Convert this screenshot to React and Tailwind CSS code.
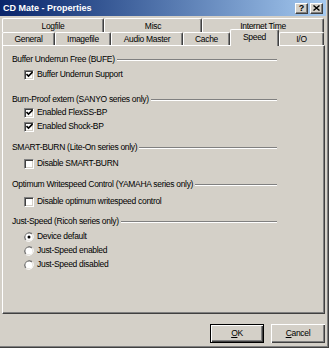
import React from 'react';

const raised =
  'border border-t-white border-l-white border-r-[#404040] border-b-[#404040] shadow-[inset_-1px_-1px_#808080]';

function TitleBar() {
  return (
    <div className="w-[326px] h-[16px] flex items-center bg-gradient-to-r from-[#0a246a] to-[#a6caf0] pl-[3px] pr-[3px] tracking-normal">
      <span className="text-white font-bold text-[9px] leading-none">CD Mate - Properties</span>
      <div className="ml-auto flex gap-[2px]">
        <div className={`w-[13px] h-[11px] bg-[#d4d0c8] ${raised} flex items-center justify-center text-[9px] font-bold leading-none text-black`}>
          ?
        </div>
        <div className={`w-[13px] h-[11px] bg-[#d4d0c8] ${raised} flex items-center justify-center`}>
          <svg width="7" height="6" viewBox="0 0 7 6">
            <path d="M0.5 0.5L6.5 5.5M6.5 0.5L0.5 5.5" stroke="#000" strokeWidth="1.4" />
          </svg>
        </div>
      </div>
    </div>
  );
}

function Tab({ label, w, selected }) {
  if (selected) {
    return (
      <div
        className="h-[17px] -mt-[3px] relative z-10 bg-[#d4d0c8] border-t border-l border-t-white border-l-white border-r border-r-[#404040] shadow-[inset_-1px_0_#808080] rounded-t-[2px] flex justify-center pt-[3px]"
        style={{ width: w }}
      >
        {label}
      </div>
    );
  }
  return (
    <div
      className="h-full border-t border-l border-t-white border-l-white border-r border-r-[#404040] shadow-[inset_-1px_0_#808080] rounded-t-[2px] flex items-center justify-center pt-[1px]"
      style={{ width: w }}
    >
      {label}
    </div>
  );
}

function Group({ title }) {
  return (
    <div className="h-[13px] w-[265px] flex items-center">
      <span className="whitespace-nowrap">{title}</span>
      <div className="flex-1 ml-[2px] mt-[1px] h-[2px] border-t border-t-[#808080] border-b border-b-white" />
    </div>
  );
}

function Check({ label, checked, mt }) {
  return (
    <div className={`h-[13px] flex items-center pl-[12px] ${mt}`}>
      <div className="w-[10px] h-[10px] shrink-0 bg-white border border-t-[#808080] border-l-[#808080] border-r-white border-b-white shadow-[inset_1px_1px_#404040,inset_-1px_-1px_#d4d0c8] flex items-center justify-center">
        {checked && (
          <svg width="7" height="7" viewBox="0 0 7 7">
            <path d="M0.5 3L2.5 5L6.5 1" stroke="#000" strokeWidth="1.6" fill="none" />
          </svg>
        )}
      </div>
      <span className="ml-[3px]">{label}</span>
    </div>
  );
}

function Radio({ label, checked, mt }) {
  return (
    <div className={`h-[13px] flex items-center pl-[12px] ${mt}`}>
      <svg width="10" height="10" viewBox="0 0 12 12" className="shrink-0">
        <path d="M10.2 1.8A6 6 0 0 0 1.8 10.2" stroke="#808080" strokeWidth="1" fill="none" />
        <path d="M9.5 2.5A5 5 0 0 0 2.5 9.5" stroke="#404040" strokeWidth="1" fill="none" />
        <path d="M1.8 10.2A6 6 0 0 0 10.2 1.8" stroke="#fff" strokeWidth="1" fill="none" />
        <circle cx="6" cy="6" r="4.3" fill="#fff" />
        {checked && <circle cx="6" cy="6" r="1.8" fill="#000" />}
      </svg>
      <span className="ml-[3px]">{label}</span>
    </div>
  );
}

function Button({ label, isDefault }) {
  const first = label[0];
  const rest = label.slice(1);
  return (
    <div
      className={`w-[54px] h-[19px] bg-[#d4d0c8] flex items-center justify-center ${
        isDefault
          ? 'border border-black shadow-[inset_1px_1px_#fff,inset_-1px_-1px_#404040,inset_-2px_-2px_#808080]'
          : 'shadow-[inset_1px_1px_#fff,inset_-1px_-1px_#404040,inset_-2px_-2px_#808080]'
      }`}
    >
      <span>
        <span className="underline">{first}</span>
        {rest}
      </span>
    </div>
  );
}

export default function App() {
  return (
    <div className="w-[329px] h-[348px] bg-[#d4d0c8] shadow-[inset_-1px_-1px_#404040,inset_-2px_-2px_#808080] font-['Liberation_Sans',Arial,sans-serif] text-[8.5px] tracking-[-0.3px] text-black leading-none overflow-hidden flex flex-col">
      <TitleBar />

      <div className="ml-[2px] mt-[2px] h-[14px] flex">
        <Tab label="Logfile" w={102} />
        <Tab label="Misc" w={98} />
        <Tab label="Internet Time" w={122} />
      </div>
      <div className="ml-[2px] h-[13px] flex items-start">
        <Tab label="General" w={53} />
        <Tab label="Imagefile" w={56} />
        <Tab label="Audio Master" w={72} />
        <Tab label="Cache" w={47} />
        <Tab label="Speed" w={49} selected />
        <Tab label="I/O" w={45} />
      </div>

      <div className={`ml-[2px] w-[323px] h-[269px] ${raised} pl-[9px] pt-[7px]`}>
        <Group title="Buffer Underrun Free (BUFE)" />
        <Check label="Buffer Underrun Support" checked mt="mt-[2px]" />

        <div className="mt-[12px]">
          <Group title="Burn-Proof extern (SANYO series only)" />
        </div>
        <Check label="Enabled FlexSS-BP" checked mt="mt-0" />
        <Check label="Enabled Shock-BP" checked mt="mt-[1px]" />

        <div className="mt-[8px]">
          <Group title="SMART-BURN (Lite-On series only)" />
        </div>
        <Check label="Disable SMART-BURN" mt="mt-[3px]" />

        <div className="mt-[8px]">
          <Group title="Optimum Writespeed Control (YAMAHA series only)" />
        </div>
        <Check label="Disable optimum writespeed control" mt="mt-[4px]" />

        <div className="mt-[7px]">
          <Group title="Just-Speed (Ricoh series only)" />
        </div>
        <Radio label="Device default" checked mt="mt-[2px]" />
        <Radio label="Just-Speed enabled" mt="mt-[1px]" />
        <Radio label="Just-Speed disabled" mt="mt-[1px]" />
      </div>

      <div className="mt-[10px] flex justify-end gap-[7px] pr-[4px]">
        <Button label="OK" isDefault />
        <Button label="Cancel" />
      </div>
    </div>
  );
}
